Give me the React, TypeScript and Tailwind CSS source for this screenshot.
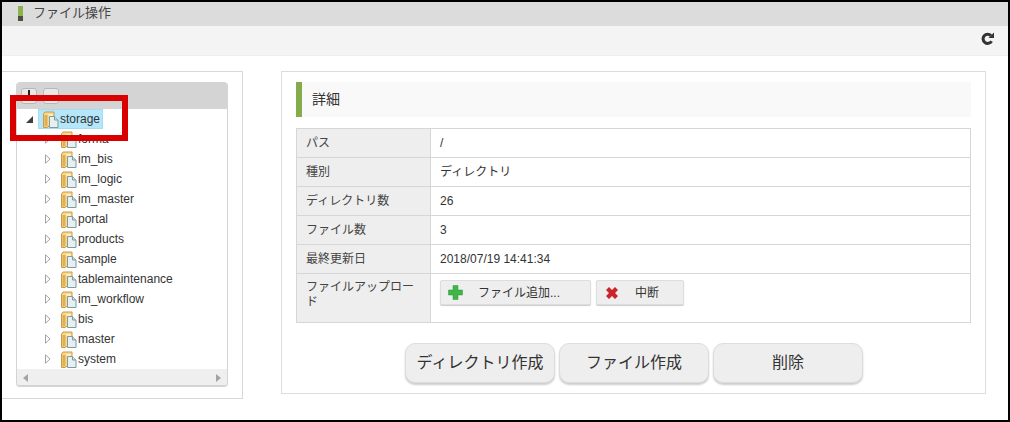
const folders = ["forma", "im_bis", "im_logic", "im_master", "portal", "products", "sample", "tablemaintenance", "im_workflow", "bis", "master", "system"];

const details: Array<[string, string]> = [
  ["パス", "/"],
  ["種別", "ディレクトリ"],
  ["ディレクトリ数", "26"],
  ["ファイル数", "3"],
  ["最終更新日", "2018/07/19 14:41:34"],
];

function FolderIcon() {
  return (
    <svg width="16" height="17" viewBox="0 0 16 17" className="shrink-0">
      <path d="M0.5 3 L2 1 H11 V6 H7 V14.5 L4 16.5 H0.5 Z" fill="#f8d98c" stroke="#c99a48" />
      <path d="M1.5 4 H4.5 V14.5 L3 15.5 H1.5 Z" fill="#e0af55" />
      <path d="M5.5 3 H10 V5 H5.5 Z" fill="#fdf0c0" />
      <path d="M6.5 5.5 H11.5 L15 9 V16.5 H6.5 Z" fill="#e6f0f1" stroke="#7f9aa1" />
      <path d="M11.5 5.5 V9 H15" fill="#cfdee1" stroke="#7f9aa1" />
    </svg>
  );
}

function Arrow({ open }: { open?: boolean }) {
  if (open) {
    return (
      <svg width="7" height="7" viewBox="0 0 7 7" className="shrink-0">
        <path d="M0 7 L7 0 V7 Z" fill="#3f3f3f" />
      </svg>
    );
  }
  return (
    <svg width="6" height="10" viewBox="0 0 6 10" className="shrink-0">
      <path d="M0.5 0.8 L5 5 L0.5 9.2 Z" fill="#fff" stroke="#a3a3a3" />
    </svg>
  );
}

function Tree() {
  return (
    <div className="w-[212px] h-[305px] rounded-sm border-b-2 border-x border-[#d4d4d4] flex flex-col overflow-hidden">
      <div className="h-[27px] shrink-0 bg-[#d4d4d4] flex items-start gap-[6px] pl-[4px] pt-[6px]">
        <button className="relative w-4 h-4 rounded-[3px] border border-[#b8b8b8] bg-[#e8e8e8] shrink-0">
          <span className="absolute left-[6px] top-[1px] w-[2px] h-[11px] bg-[#222]" />
          <span className="absolute left-[2px] top-[6px] w-[10px] h-[2px] bg-[#222]" />
        </button>
        <button className="w-4 h-4 rounded-[3px] border border-[#b8b8b8] bg-[#e8e8e8] shrink-0" />
      </div>
      <div className="flex-1 flex flex-col bg-white">
        <div className="h-5 flex items-center pl-[9px] gap-[5px] shrink-0">
          <Arrow open />
          <div className="h-5 flex items-center gap-[1px] pl-[4px] pr-[2px] bg-[#b5e7fb] border border-[#a5dcf5]">
            <FolderIcon />
            <span className="text-[12px] text-[#333]">storage</span>
          </div>
        </div>
        {folders.map((name) => (
          <div key={name} className="h-5 flex items-center pl-[28px] gap-[10px] shrink-0">
            <Arrow />
            <div className="flex items-center gap-[1px]">
              <FolderIcon />
              <span className="text-[12px] text-[#333]">{name}</span>
            </div>
          </div>
        ))}
      </div>
      <div className="h-[17px] shrink-0 bg-[#efefef] flex items-center justify-between px-[6px] mt-auto">
        <svg width="5" height="8" viewBox="0 0 5 8"><path d="M5 0 V8 L0 4 Z" fill="#a3a3a3" /></svg>
        <svg width="5" height="8" viewBox="0 0 5 8"><path d="M0 0 V8 L5 4 Z" fill="#a3a3a3" /></svg>
      </div>
    </div>
  );
}

function SmallButton({ icon, label, width, gap }: { icon: React.ReactNode; label: string; width: string; gap: string }) {
  return (
    <button className={`${width} ${gap} h-[25px] pl-[7px] flex items-center rounded-[2px] border border-[#ddd] bg-[#eee] shadow-[0_1px_1px_rgba(0,0,0,0.2)] text-[12px] text-[#333]`}>
      {icon}
      <span>{label}</span>
    </button>
  );
}

function BigButton({ label }: { label: string }) {
  return (
    <button className="w-[150px] h-10 rounded-[10px] border border-[#ddd] bg-[#eee] shadow-[0_2px_2px_rgba(0,0,0,0.2)] text-[16px] text-[#333]">
      {label}
    </button>
  );
}

export default function App() {
  return (
    <div
      className="w-[1010px] h-[422px] border-2 border-black bg-white overflow-hidden relative flex flex-col text-[#333]"
      style={{ fontFamily: '"Liberation Sans", "Noto Sans CJK JP", sans-serif' }}
    >
      <div className="h-6 shrink-0 bg-[#dcdcdc] flex items-start pl-[16px] pt-[4px] gap-[10px]">
        <span className="w-[5px] h-[15px] flex flex-col shrink-0">
          <span className="h-[10px] bg-[#8bb24d]" />
          <span className="h-[5px] bg-[#4d5040]" />
        </span>
        <span className="text-[13px] leading-[13px] text-[#444]">ファイル操作</span>
      </div>
      <div className="h-[30px] shrink-0 bg-[#f4f4f4] border-b border-[#eee] flex items-center justify-end pr-[14px]">
        <svg width="13" height="13" viewBox="0 0 13 13" className="mt-[-4px]">
          <path d="M10 3.6 A4.6 4.6 0 1 0 10.6 9.2" fill="none" stroke="#333" strokeWidth="3" />
          <path d="M7.5 6 H13 V0.5 Z" fill="#333" />
        </svg>
      </div>

      <div className="flex items-start pt-[15px]">
        <div className="w-[241px] h-[328px] shrink-0 border-y border-r border-[#d8d8d8] pt-[10px] pl-[14px]">
          <Tree />
        </div>

        <div className="ml-[38px] w-[705px] h-[323px] shrink-0 border border-[#dcdcdc] pl-[14px] pt-[10px]">
          <div className="w-[675px] h-[35px] bg-[#f9f9f9] border-l-[6px] border-[#86ab4b] flex items-center pl-[10px] text-[14px]">
            詳細
          </div>
          <table className="w-[675px] mt-[11px] border-collapse table-fixed text-[12px]">
            <colgroup>
              <col className="w-[134px]" />
              <col />
            </colgroup>
            <tbody>
              {details.map(([label, value]) => (
                <tr key={label} className="h-[29px]">
                  <th className="border border-[#d6d6d6] bg-[#eee] font-normal text-left pl-[9px] text-[#444]">{label}</th>
                  <td className="border border-[#d6d6d6] pl-[9px]">{value}</td>
                </tr>
              ))}
              <tr className="h-[49px]">
                <th className="border border-[#d6d6d6] bg-[#eee] font-normal text-left align-top pl-[9px] pr-[8px] pt-[6px] leading-[15px] text-[#444]">
                  ファイルアップロード
                </th>
                <td className="border border-[#d6d6d6] pl-[9px] align-top pt-[6px]">
                  <div className="flex gap-[5px]">
                    <SmallButton
                      width="w-[151px]"
                      gap="gap-[15px]"
                      label="ファイル追加..."
                      icon={
                        <svg width="15" height="15" viewBox="0 0 15 15">
                          <path d="M5 0.5 H10 V5 H14.5 V10 H10 V14.5 H5 V10 H0.5 V5 H5 Z" fill="#3fb54a" stroke="#2d9b3a" strokeWidth="0.5" />
                        </svg>
                      }
                    />
                    <SmallButton
                      width="w-[88px]"
                      gap="gap-[16px]"
                      label="中断"
                      icon={
                        <svg width="14" height="14" viewBox="0 0 14 14" className="ml-[1px]">
                          <path d="M1 4 L4 1 L7 4 L10 1 L13 4 L10 7 L13 10 L10 13 L7 10 L4 13 L1 10 L4 7 Z" fill="#c9252b" />
                        </svg>
                      }
                    />
                  </div>
                </td>
              </tr>
            </tbody>
          </table>
          <div className="flex gap-1 mt-5 ml-[109px]">
            <BigButton label="ディレクトリ作成" />
            <BigButton label="ファイル作成" />
            <BigButton label="削除" />
          </div>
        </div>
      </div>

      {/* red annotation over the tree root */}
      <div className="absolute left-[8px] top-[93px] w-[118px] h-[46px] border-[6px] border-[#d90000] pointer-events-none" />
    </div>
  );
}
